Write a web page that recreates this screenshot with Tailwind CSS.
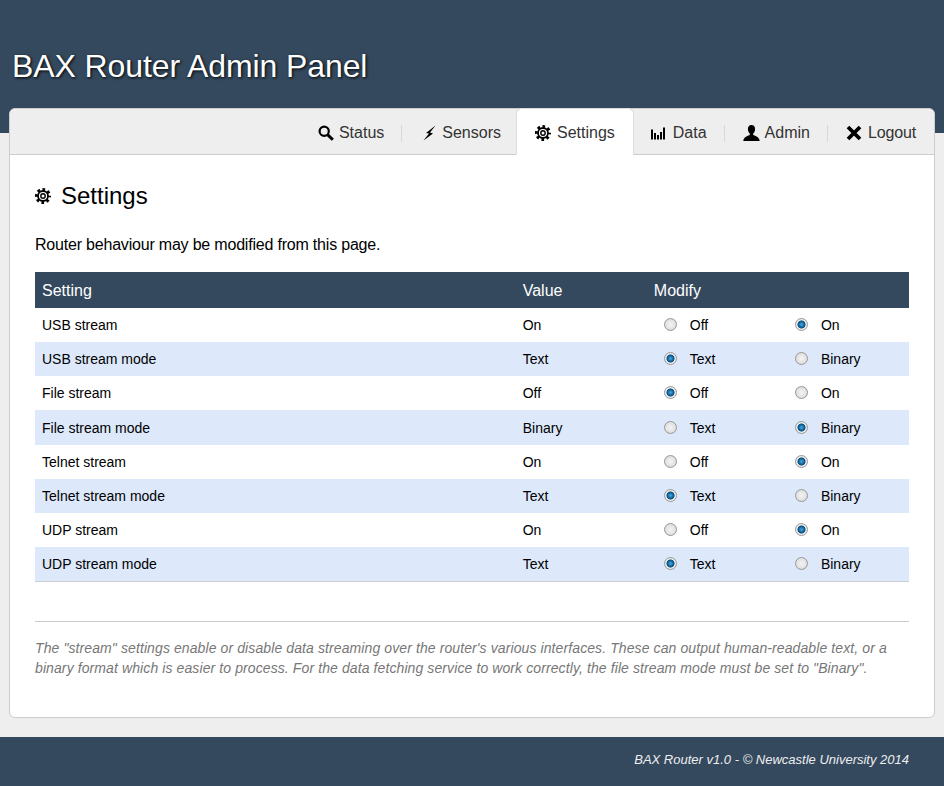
<!DOCTYPE html>
<html lang="en">
  <head>
    <meta charset="UTF-8" />
    <meta name="viewport" content="width=device-width, initial-scale=1.0" />
    <title>BAX Router Admin Panel</title>
    <script src="https://cdn.jsdelivr.net/npm/@tailwindcss/browser@4"></script>
  </head>
  <body class="min-h-screen bg-[#eeeeee] font-['Liberation_Sans',Arial,sans-serif] text-black">
    <!-- Header -->
    <header class="h-[133px] bg-[#34495e] pl-3 pt-[44px]">
      <h1 class="text-[32px] leading-[44px] tracking-[-0.1px] text-white [text-shadow:1px_1px_3px_#000]">BAX Router Admin Panel</h1>
    </header>

    <!-- Main card -->
    <main class="relative mx-[9px] -mt-[25px] h-[610px] rounded-md border border-[#cccccc] bg-white">
      <nav class="flex h-[46px] items-end justify-end rounded-t-md border-b border-[#cccccc] bg-[#eeeeee] pr-[18px] text-base text-[#333333]">
        <ul class="flex h-[46px] items-center">
          <li class="mt-1 flex h-[17px] items-center border-r border-[#d8d8d8] pr-[17px]">
            <svg class="mr-[5px] h-4 w-4" viewBox="0 0 16 16" fill="none" stroke="#000"><circle cx="6.200" cy="6.200" r="4.600" stroke-width="2.200" /><path d="M9.600 9.600 14.800 14.800" stroke-width="3" /></svg>
            <span>Status</span>
          </li>
          <li class="mt-1 flex h-[17px] items-center pl-[21px] pr-[15px]">
            <svg class="mr-[6px] h-4 w-[13px]" viewBox="0 0 13 16" fill="#000"><path d="M12.500 .5 3 8 6 8.500 .5 15.500 10 8.500 7 7.500Z" /></svg>
            <span>Sensors</span>
          </li>
          <li class="relative -mb-px flex h-[47px] items-center rounded-t-md border border-b-0 border-[#dddddd] bg-white px-[18px] pt-[2px]">
            <svg class="mr-[6px] h-4 w-4" viewBox="0 0 16 16" fill="none" stroke="#000"><circle cx="8" cy="8" r="6.500" stroke-width="3" stroke-dasharray="2.600 2.505" stroke-dashoffset="1.300" /><circle cx="8" cy="8" r="5" stroke-width="1.800" /><circle cx="8" cy="8" r="2.200" stroke-width="1.400" /></svg>
            <span>Settings</span>
          </li>
          <li class="mt-1 flex h-[17px] items-center border-r border-[#d8d8d8] pl-4 pr-[17px]">
            <svg class="mr-[7px] h-4 w-4" viewBox="0 0 16 16" fill="#000"><path d="M1 4.500h2v10H1zM4 8h2v6.500H4zM7 10h2v4.500H7zM10 7h2v7.500h-2zM13 2.500h2v12h-2z" /></svg>
            <span>Data</span>
          </li>
          <li class="mt-1 flex h-[17px] items-center border-r border-[#d8d8d8] pl-[18px] pr-[17px]">
            <svg class="mr-[5px] h-4 w-[17px]" viewBox="0 0 17 16" fill="#000"><path d="M8.500 0C6 0 4.900 1.700 4.900 4c0 2 .9 3.600 1.900 4.600v1.500C4.800 11 .6 12 .3 16h16.400c-.3-4-4.500-5-6.500-5.900V8.600c1-1 1.900-2.600 1.900-4.600 0-2.300-1.100-4-3.600-4z" /></svg>
            <span>Admin</span>
          </li>
          <li class="mt-1 flex h-[17px] items-center pl-[18px]">
            <svg class="mr-[6px] h-4 w-4" viewBox="0 0 16 16" stroke="#000" stroke-width="3.800"><path d="M2 2 14 14M14 2 2 14" /></svg>
            <span class="tracking-[-0.15px]">Logout</span>
          </li>
        </ul>
      </nav>

      <section class="px-[25px]">
        <h2 class="mt-[25px] flex items-center text-2xl leading-[32px]">
          <svg class="mr-[10px] h-4 w-4" viewBox="0 0 16 16" fill="none" stroke="#000"><circle cx="8" cy="8" r="6.500" stroke-width="3" stroke-dasharray="2.600 2.505" stroke-dashoffset="1.300" /><circle cx="8" cy="8" r="5" stroke-width="1.800" /><circle cx="8" cy="8" r="2.200" stroke-width="1.400" /></svg>
          Settings
        </h2>
        <p class="mt-[22px] text-base leading-[22px] tracking-[-0.2px]">Router behaviour may be modified from this page.</p>

        <table class="mt-4 w-full table-fixed border-b border-[#cccccc] text-sm">
          <colgroup>
            <col class="w-[55%]" /><col class="w-[15%]" /><col class="w-[15%]" /><col class="w-[15%]" />
          </colgroup>
          <thead class="bg-[#34495e] text-left text-base text-white">
            <tr class="h-9">
              <th class="px-[7px] pt-[2px] font-normal">Setting</th>
              <th class="px-[7px] pt-[2px] font-normal">Value</th>
              <th class="px-[7px] pt-[2px] font-normal" colspan="2">Modify</th>
            </tr>
          </thead>
          <tbody>
            <tr class="h-[34px]">
              <td class="px-[7px]">USB stream</td>
              <td class="px-[7px]">On</td>
              <td class="px-[7px]"><label class="flex items-center pl-[10px]"><input type="radio" name="usb" class="mb-[2px] mr-[13px] h-[13px] w-[13px] appearance-none rounded-full border border-[#999999] bg-[radial-gradient(circle,#f4f4f4_0%,#e2e2e2_60%,#c8c8c8_100%)] checked:bg-[radial-gradient(circle,#4aa8e0_0%,#0b5c8e_40%,#0f4f7d_48%,#f0f0f0_56%,#dcdcdc_90%)]" />Off</label></td>
              <td class="px-[7px]"><label class="flex items-center pl-[10px]"><input type="radio" name="usb" checked class="mb-[2px] mr-[13px] h-[13px] w-[13px] appearance-none rounded-full border border-[#999999] bg-[radial-gradient(circle,#f4f4f4_0%,#e2e2e2_60%,#c8c8c8_100%)] checked:bg-[radial-gradient(circle,#4aa8e0_0%,#0b5c8e_40%,#0f4f7d_48%,#f0f0f0_56%,#dcdcdc_90%)]" />On</label></td>
            </tr>
            <tr class="h-[34px] bg-[#dde9fb]">
              <td class="px-[7px]">USB stream mode</td>
              <td class="px-[7px]">Text</td>
              <td class="px-[7px]"><label class="flex items-center pl-[10px]"><input type="radio" name="usbmode" checked class="mb-[2px] mr-[13px] h-[13px] w-[13px] appearance-none rounded-full border border-[#999999] bg-[radial-gradient(circle,#f4f4f4_0%,#e2e2e2_60%,#c8c8c8_100%)] checked:bg-[radial-gradient(circle,#4aa8e0_0%,#0b5c8e_40%,#0f4f7d_48%,#f0f0f0_56%,#dcdcdc_90%)]" />Text</label></td>
              <td class="px-[7px]"><label class="flex items-center pl-[10px]"><input type="radio" name="usbmode" class="mb-[2px] mr-[13px] h-[13px] w-[13px] appearance-none rounded-full border border-[#999999] bg-[radial-gradient(circle,#f4f4f4_0%,#e2e2e2_60%,#c8c8c8_100%)] checked:bg-[radial-gradient(circle,#4aa8e0_0%,#0b5c8e_40%,#0f4f7d_48%,#f0f0f0_56%,#dcdcdc_90%)]" />Binary</label></td>
            </tr>
            <tr class="h-[34px]">
              <td class="px-[7px]">File stream</td>
              <td class="px-[7px]">Off</td>
              <td class="px-[7px]"><label class="flex items-center pl-[10px]"><input type="radio" name="file" checked class="mb-[2px] mr-[13px] h-[13px] w-[13px] appearance-none rounded-full border border-[#999999] bg-[radial-gradient(circle,#f4f4f4_0%,#e2e2e2_60%,#c8c8c8_100%)] checked:bg-[radial-gradient(circle,#4aa8e0_0%,#0b5c8e_40%,#0f4f7d_48%,#f0f0f0_56%,#dcdcdc_90%)]" />Off</label></td>
              <td class="px-[7px]"><label class="flex items-center pl-[10px]"><input type="radio" name="file" class="mb-[2px] mr-[13px] h-[13px] w-[13px] appearance-none rounded-full border border-[#999999] bg-[radial-gradient(circle,#f4f4f4_0%,#e2e2e2_60%,#c8c8c8_100%)] checked:bg-[radial-gradient(circle,#4aa8e0_0%,#0b5c8e_40%,#0f4f7d_48%,#f0f0f0_56%,#dcdcdc_90%)]" />On</label></td>
            </tr>
            <tr class="h-[35px] bg-[#dde9fb]">
              <td class="px-[7px]">File stream mode</td>
              <td class="px-[7px]">Binary</td>
              <td class="px-[7px]"><label class="flex items-center pl-[10px]"><input type="radio" name="filemode" class="mb-px mr-[13px] h-[13px] w-[13px] appearance-none rounded-full border border-[#999999] bg-[radial-gradient(circle,#f4f4f4_0%,#e2e2e2_60%,#c8c8c8_100%)] checked:bg-[radial-gradient(circle,#4aa8e0_0%,#0b5c8e_40%,#0f4f7d_48%,#f0f0f0_56%,#dcdcdc_90%)]" />Text</label></td>
              <td class="px-[7px]"><label class="flex items-center pl-[10px]"><input type="radio" name="filemode" checked class="mb-px mr-[13px] h-[13px] w-[13px] appearance-none rounded-full border border-[#999999] bg-[radial-gradient(circle,#f4f4f4_0%,#e2e2e2_60%,#c8c8c8_100%)] checked:bg-[radial-gradient(circle,#4aa8e0_0%,#0b5c8e_40%,#0f4f7d_48%,#f0f0f0_56%,#dcdcdc_90%)]" />Binary</label></td>
            </tr>
            <tr class="h-[34px]">
              <td class="px-[7px]">Telnet stream</td>
              <td class="px-[7px]">On</td>
              <td class="px-[7px]"><label class="flex items-center pl-[10px]"><input type="radio" name="telnet" class="mb-[2px] mr-[13px] h-[13px] w-[13px] appearance-none rounded-full border border-[#999999] bg-[radial-gradient(circle,#f4f4f4_0%,#e2e2e2_60%,#c8c8c8_100%)] checked:bg-[radial-gradient(circle,#4aa8e0_0%,#0b5c8e_40%,#0f4f7d_48%,#f0f0f0_56%,#dcdcdc_90%)]" />Off</label></td>
              <td class="px-[7px]"><label class="flex items-center pl-[10px]"><input type="radio" name="telnet" checked class="mb-[2px] mr-[13px] h-[13px] w-[13px] appearance-none rounded-full border border-[#999999] bg-[radial-gradient(circle,#f4f4f4_0%,#e2e2e2_60%,#c8c8c8_100%)] checked:bg-[radial-gradient(circle,#4aa8e0_0%,#0b5c8e_40%,#0f4f7d_48%,#f0f0f0_56%,#dcdcdc_90%)]" />On</label></td>
            </tr>
            <tr class="h-[34px] bg-[#dde9fb]">
              <td class="px-[7px]">Telnet stream mode</td>
              <td class="px-[7px]">Text</td>
              <td class="px-[7px]"><label class="flex items-center pl-[10px]"><input type="radio" name="telnetmode" checked class="mb-[2px] mr-[13px] h-[13px] w-[13px] appearance-none rounded-full border border-[#999999] bg-[radial-gradient(circle,#f4f4f4_0%,#e2e2e2_60%,#c8c8c8_100%)] checked:bg-[radial-gradient(circle,#4aa8e0_0%,#0b5c8e_40%,#0f4f7d_48%,#f0f0f0_56%,#dcdcdc_90%)]" />Text</label></td>
              <td class="px-[7px]"><label class="flex items-center pl-[10px]"><input type="radio" name="telnetmode" class="mb-[2px] mr-[13px] h-[13px] w-[13px] appearance-none rounded-full border border-[#999999] bg-[radial-gradient(circle,#f4f4f4_0%,#e2e2e2_60%,#c8c8c8_100%)] checked:bg-[radial-gradient(circle,#4aa8e0_0%,#0b5c8e_40%,#0f4f7d_48%,#f0f0f0_56%,#dcdcdc_90%)]" />Binary</label></td>
            </tr>
            <tr class="h-[34px]">
              <td class="px-[7px]">UDP stream</td>
              <td class="px-[7px]">On</td>
              <td class="px-[7px]"><label class="flex items-center pl-[10px]"><input type="radio" name="udp" class="mb-[2px] mr-[13px] h-[13px] w-[13px] appearance-none rounded-full border border-[#999999] bg-[radial-gradient(circle,#f4f4f4_0%,#e2e2e2_60%,#c8c8c8_100%)] checked:bg-[radial-gradient(circle,#4aa8e0_0%,#0b5c8e_40%,#0f4f7d_48%,#f0f0f0_56%,#dcdcdc_90%)]" />Off</label></td>
              <td class="px-[7px]"><label class="flex items-center pl-[10px]"><input type="radio" name="udp" checked class="mb-[2px] mr-[13px] h-[13px] w-[13px] appearance-none rounded-full border border-[#999999] bg-[radial-gradient(circle,#f4f4f4_0%,#e2e2e2_60%,#c8c8c8_100%)] checked:bg-[radial-gradient(circle,#4aa8e0_0%,#0b5c8e_40%,#0f4f7d_48%,#f0f0f0_56%,#dcdcdc_90%)]" />On</label></td>
            </tr>
            <tr class="h-[34px] bg-[#dde9fb]">
              <td class="px-[7px]">UDP stream mode</td>
              <td class="px-[7px]">Text</td>
              <td class="px-[7px]"><label class="flex items-center pl-[10px]"><input type="radio" name="udpmode" checked class="mb-px mr-[13px] h-[13px] w-[13px] appearance-none rounded-full border border-[#999999] bg-[radial-gradient(circle,#f4f4f4_0%,#e2e2e2_60%,#c8c8c8_100%)] checked:bg-[radial-gradient(circle,#4aa8e0_0%,#0b5c8e_40%,#0f4f7d_48%,#f0f0f0_56%,#dcdcdc_90%)]" />Text</label></td>
              <td class="px-[7px]"><label class="flex items-center pl-[10px]"><input type="radio" name="udpmode" class="mb-px mr-[13px] h-[13px] w-[13px] appearance-none rounded-full border border-[#999999] bg-[radial-gradient(circle,#f4f4f4_0%,#e2e2e2_60%,#c8c8c8_100%)] checked:bg-[radial-gradient(circle,#4aa8e0_0%,#0b5c8e_40%,#0f4f7d_48%,#f0f0f0_56%,#dcdcdc_90%)]" />Binary</label></td>
            </tr>
          </tbody>
        </table>

        <hr class="mt-[39px] border-[#cccccc]" />
        <p class="mt-4 text-sm italic leading-[20px] tracking-[0.1px] text-[#777777]">The "stream" settings enable or disable data streaming over the router's various interfaces. These can output human-readable text, or a binary format which is easier to process. For the data fetching service to work correctly, the file stream mode must be set to "Binary".</p>
      </section>
    </main>

    <!-- Footer -->
    <footer class="mt-[19px] flex h-[49px] items-center justify-end bg-[#34495e] pb-1 pr-[35px] text-[13px] italic text-[#eeeeee]">
      BAX Router v1.0 - © Newcastle University 2014
    </footer>
  </body>
</html>
